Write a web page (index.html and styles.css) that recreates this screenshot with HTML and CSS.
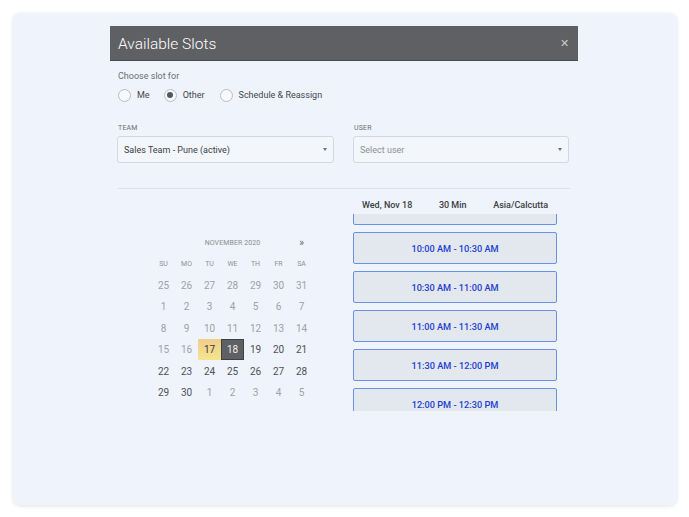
FILE: index.html
```html
<!DOCTYPE html>
<html>
<head>
<meta charset="utf-8">
<link rel="stylesheet" href="styles.css">
</head>
<body>
<div class="card">
  <div class="modal">
    <div class="modal-header">
      <span class="modal-title">Available Slots</span>
      <span class="close">&#x2715;</span>
    </div>
    <div class="modal-body">
      <div class="choose-label">Choose slot for</div>
      <div class="radios">
        <label class="radio"><span class="circle"></span>Me</label>
        <label class="radio"><span class="circle checked"></span>Other</label>
        <label class="radio"><span class="circle"></span>Schedule &amp; Reassign</label>
      </div>
      <div class="fields">
        <div class="field">
          <div class="field-label">TEAM</div>
          <div class="select"><span>Sales Team - Pune (active)</span><span class="caret"></span></div>
        </div>
        <div class="field">
          <div class="field-label">USER</div>
          <div class="select placeholder"><span>Select user</span><span class="caret"></span></div>
        </div>
      </div>
      <div class="divider"></div>
      <div class="lower">
        <div class="cal-col">
          <div class="calendar">
            <div class="cal-title">NOVEMBER 2020</div>
            <div class="cal-next">&raquo;</div>
            <div class="dh">SU</div><div class="dh">MO</div><div class="dh">TU</div><div class="dh">WE</div><div class="dh">TH</div><div class="dh">FR</div><div class="dh">SA</div>
            <div class="d off">25</div><div class="d off">26</div><div class="d off">27</div><div class="d off">28</div><div class="d off">29</div><div class="d off">30</div><div class="d off">31</div>
            <div class="d off">1</div><div class="d off">2</div><div class="d off">3</div><div class="d off">4</div><div class="d off">5</div><div class="d off">6</div><div class="d off">7</div>
            <div class="d off">8</div><div class="d off">9</div><div class="d off">10</div><div class="d off">11</div><div class="d off">12</div><div class="d off">13</div><div class="d off">14</div>
            <div class="d off">15</div><div class="d off">16</div><div class="d today">17</div><div class="d sel">18</div><div class="d">19</div><div class="d">20</div><div class="d">21</div>
            <div class="d">22</div><div class="d">23</div><div class="d">24</div><div class="d">25</div><div class="d">26</div><div class="d">27</div><div class="d">28</div>
            <div class="d">29</div><div class="d">30</div><div class="d off">1</div><div class="d off">2</div><div class="d off">3</div><div class="d off">4</div><div class="d off">5</div>
          </div>
        </div>
        <div class="slot-col">
          <div class="slot-head"><span>Wed, Nov 18</span><span>30 Min</span><span>Asia/Calcutta</span></div>
          <div class="slot-list">
            <div class="slots">
              <div class="slot partial"></div>
              <div class="slot">10:00 AM - 10:30 AM</div>
              <div class="slot">10:30 AM - 11:00 AM</div>
              <div class="slot">11:00 AM - 11:30 AM</div>
              <div class="slot">11:30 AM - 12:00 PM</div>
              <div class="slot">12:00 PM - 12:30 PM</div>
            </div>
          </div>
        </div>
      </div>
    </div>
  </div>
</div>
</body>
</html>
```
FILE: styles.css
```css
* { box-sizing: border-box; }
html, body { margin: 0; padding: 0; background: #ffffff; }
body {
  font-family: Roboto, "Liberation Sans", Arial, sans-serif;
  padding: 13px 12px 12px 13px;
}
.card {
  width: 664px;
  height: 492px;
  background: #eef3fc;
  border-radius: 8px;
  box-shadow: 0 1px 4px rgba(0,0,0,0.12);
  padding-top: 13px;
  padding-left: 97px;
  display: flex;
}
.modal {
  width: 468px;
}
.modal-header {
  height: 35px;
  background: #5f6064;
  border-bottom: 1px solid #4a4b4f;
  display: flex;
  align-items: center;
  justify-content: space-between;
  padding: 0 8px 0 8px;
}
.modal-title {
  color: #ffffff;
  font-size: 15.5px;
  font-weight: 300;
  margin-top: 1px;
}
.close {
  color: #c9cacc;
  font-size: 11px;
  margin-right: 1px;
}
.modal-body {
  padding: 9px 8px 0 7px;
}
.choose-label {
  font-size: 9px;
  color: #6b6e74;
  padding-left: 1px;
  line-height: 12px;
}
.radios {
  display: flex;
  margin-top: 6px;
  height: 14px;
  align-items: center;
  padding-left: 1px;
}
.radio {
  display: flex;
  align-items: center;
  font-size: 9px;
  color: #44474d;
  margin-right: 14px;
}
.radio:nth-child(2) { margin-right: 15px; }
.circle {
  width: 13px;
  height: 13px;
  border-radius: 50%;
  border: 1px solid #b9bcc2;
  background: #f7f9fc;
  margin-right: 6px;
  display: flex;
  align-items: center;
  justify-content: center;
}
.circle.checked::after {
  content: "";
  width: 6px;
  height: 6px;
  border-radius: 50%;
  background: #55575c;
}
.fields {
  display: flex;
  gap: 19px;
  margin-top: 22px;
}
.field { width: 217px; }
.field:nth-child(2) { width: 216px; }
.field-label {
  font-size: 7px;
  color: #6b6e74;
  letter-spacing: 0.2px;
  line-height: 9px;
  padding-left: 1px;
}
.select {
  margin-top: 3px;
  height: 27px;
  border: 1px solid #d3d7de;
  border-radius: 3px;
  background: #f3f6fb;
  display: flex;
  align-items: center;
  justify-content: space-between;
  padding: 0 6px 0 6px;
  font-size: 9px;
  color: #3d4046;
}
.select.placeholder { color: #8d9097; }
.caret {
  width: 0;
  height: 0;
  border-left: 2px solid transparent;
  border-right: 2px solid transparent;
  border-top: 3px solid #6d7076;
}
.divider {
  margin-top: 25px;
  margin-left: 1px;
  height: 1px;
  background: #dde1e8;
}
.lower {
  display: flex;
}
.cal-col {
  width: 236px;
  padding-top: 43px;
  padding-left: 35px;
}
.calendar {
  display: grid;
  grid-template-columns: repeat(7, 23px);
  grid-auto-rows: 21.4px;
  align-items: center;
  justify-items: center;
}
.cal-title {
  grid-column: 2 / 7;
  font-size: 7px;
  color: #8a8d93;
  letter-spacing: 0.1px;
}
.cal-next {
  grid-column: 7;
  font-size: 10px;
  color: #666a70;
}
.dh {
  font-size: 7px;
  color: #8f9298;
}
.d {
  width: 100%;
  height: 100%;
  display: flex;
  align-items: center;
  justify-content: center;
  font-size: 10px;
  color: #4e5157;
}
.d.off { color: #9ea1a8; }
.d.today {
  background: linear-gradient(180deg, #f0cd8d 0%, #f4e58f 100%);
  color: #3a3a3a;
}
.d.sel {
  background: #5f6064;
  border: 1px solid #3f4044;
  color: #eeeeee;
}
.slot-col {
  width: 204px;
}
.slot-head {
  height: 25px;
  display: flex;
  align-items: flex-end;
  justify-content: space-between;
  padding: 0 9px 3px 9px;
  font-size: 9px;
  font-weight: 500;
  color: #3b3e44;
  line-height: 11px;
}
.slot-list {
  height: 197px;
  overflow: hidden;
}
.slots {
  margin-top: -21px;
  display: flex;
  flex-direction: column;
  gap: 7px;
}
.slot {
  height: 32px;
  flex: none;
  border: 1.5px solid #6b8fe3;
  border-radius: 2px;
  background: #e3e7ee;
  display: flex;
  align-items: center;
  justify-content: center;
  font-size: 9.2px;
  font-weight: 500;
  color: #1d3fcf;
}
```
